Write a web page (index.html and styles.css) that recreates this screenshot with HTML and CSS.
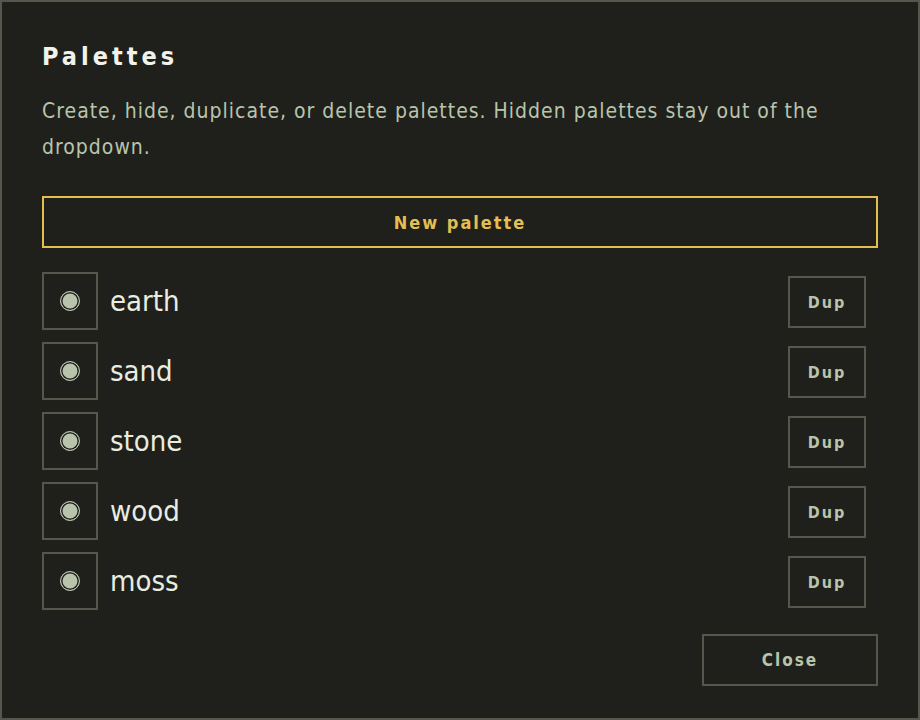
FILE: index.html
```html
<!DOCTYPE html>
<html lang="en">
<head>
<meta charset="utf-8">
<title>Palettes</title>
<link rel="stylesheet" href="styles.css">
</head>
<body>
<div class="dialog">
  <h2 class="title">Palettes</h2>
  <p class="desc">Create, hide, duplicate, or delete palettes. Hidden palettes stay out of the dropdown.</p>
  <button class="btn btn-new">New palette</button>
  <ul class="list">
    <li class="row">
      <span class="toggle"><span class="dot"></span></span>
      <span class="name">earth</span>
      <button class="btn btn-dup">Dup</button>
    </li>
    <li class="row">
      <span class="toggle"><span class="dot"></span></span>
      <span class="name">sand</span>
      <button class="btn btn-dup">Dup</button>
    </li>
    <li class="row">
      <span class="toggle"><span class="dot"></span></span>
      <span class="name">stone</span>
      <button class="btn btn-dup">Dup</button>
    </li>
    <li class="row">
      <span class="toggle"><span class="dot"></span></span>
      <span class="name">wood</span>
      <button class="btn btn-dup">Dup</button>
    </li>
    <li class="row">
      <span class="toggle"><span class="dot"></span></span>
      <span class="name">moss</span>
      <button class="btn btn-dup">Dup</button>
    </li>
  </ul>
  <div class="footer">
    <button class="btn btn-close">Close</button>
  </div>
</div>
</body>
</html>
```
FILE: styles.css
```css
* { box-sizing: border-box; }
html, body { margin: 0; padding: 0; background: #1f201b; }
body { font-family: "DejaVu Sans Condensed", "DejaVu Sans", sans-serif; font-stretch: condensed; }
.dialog {
  width: 920px;
  height: 720px;
  border: 2px solid #55574c;
  background: #1f201b;
  padding: 40px 40px 32px;
  display: flex;
  flex-direction: column;
}
.title {
  margin: 0;
  font-size: 25px;
  line-height: 30px;
  font-weight: 700;
  letter-spacing: 4px;
  color: #f1f3eb;
}
.desc {
  margin: 21px 0 0;
  font-size: 21px;
  line-height: 36px;
  letter-spacing: 1px;
  color: #b8c4ac;
}
.btn {
  font-family: inherit;
  font-stretch: condensed;
  font-weight: 700;
  background: transparent;
  border: 2px solid #55574c;
  color: #b8c4ac;
  letter-spacing: 2px;
  padding: 0;
  cursor: pointer;
}
.btn-new {
  margin-top: 31px;
  height: 52px;
  width: 100%;
  border-color: #e3bf52;
  color: #e3bf52;
  font-size: 18px;
}
.list {
  list-style: none;
  margin: 24px 0 0;
  padding: 0;
  display: flex;
  flex-direction: column;
  gap: 12px;
}
.row {
  display: flex;
  align-items: center;
  height: 58px;
  padding-right: 12px;
}
.toggle {
  width: 56px;
  height: 58px;
  border: 2px solid #55574c;
  display: flex;
  align-items: center;
  justify-content: center;
  flex: none;
}
.dot {
  width: 20px;
  height: 20px;
  border-radius: 50%;
  border: 1.5px solid #b8c4ac;
  background: #b8c4ac;
  box-shadow: inset 0 0 0 1.5px #1f201b;
}
.name {
  margin-left: 12px;
  flex: 1;
  font-size: 29px;
  color: #e9ede0;
}
.btn-dup {
  width: 78px;
  height: 52px;
  margin-top: 2px;
  font-size: 16px;
}
.footer {
  margin-top: 24px;
  display: flex;
  justify-content: flex-end;
}
.btn-close {
  width: 176px;
  height: 52px;
  font-size: 17px;
}
```
